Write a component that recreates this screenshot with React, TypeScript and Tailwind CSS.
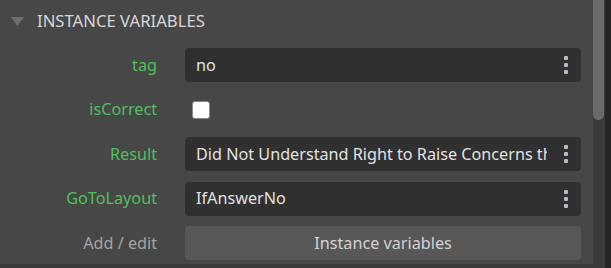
import React from "react";

const font = { fontFamily: '"Noto Sans", "Open Sans", sans-serif' };

function Dots() {
  return (
    <div className="flex flex-col items-center gap-[3px] w-[8px] shrink-0">
      <span className="block w-[4px] h-[4px] rounded-[1px] bg-[#b4bccb]" />
      <span className="block w-[4px] h-[4px] rounded-[1px] bg-[#b4bccb]" />
      <span className="block w-[4px] h-[4px] rounded-[1px] bg-[#b4bccb]" />
    </div>
  );
}

function Row({ label, labelClass, children }: { label: string; labelClass?: string; children: React.ReactNode }) {
  return (
    <div className="flex items-center h-[34px]">
      <div className={`w-[157px] shrink-0 text-right text-[16.2px] whitespace-nowrap ${labelClass ?? "text-[#4ec05c]"}`}>{label}</div>
      <div className="w-[28px] shrink-0" />
      <div className="flex-1 min-w-0 h-full flex items-center">{children}</div>
    </div>
  );
}

function Field({ value }: { value: string }) {
  return (
    <div className="flex-1 h-full rounded-[4px] bg-[#303030] flex items-center pl-[11px] pr-[11px] min-w-0">
      <div className="flex-1 min-w-0 overflow-hidden whitespace-nowrap text-[16.2px] text-[#e2e2e2] mr-[15px]">{value}</div>
      <Dots />
    </div>
  );
}

export default function App() {
  return (
    <div className="w-[611px] h-[268px] bg-[#262626] flex overflow-hidden" style={font}>
      <div className="flex-1 min-w-0 flex flex-col">
        <div className="flex-1 bg-[#474747] flex flex-col pr-[12px]">
          <div className="h-[42px] flex items-center">
            <svg width="13" height="9" viewBox="0 0 13 9" className="ml-[11px] mr-[13px] shrink-0">
              <polygon points="0,0 13,0 6.5,9" fill="#6e6e6e" />
            </svg>
            <span className="text-[16.7px] text-[#d6d6d6] whitespace-nowrap">INSTANCE VARIABLES</span>
          </div>
          <div className="flex flex-col gap-[10.5px] mt-[6px]">
            <Row label="tag">
              <Field value="no" />
            </Row>
            <Row label="isCorrect">
              <div className="ml-[7px] w-[18px] h-[18px] rounded-[3px] bg-white border border-[#8a8a8a]" />
            </Row>
            <Row label="Result">
              <Field value="Did Not Understand Right to Raise Concerns that were raised" />
            </Row>
            <Row label="GoToLayout">
              <Field value="IfAnswerNo" />
            </Row>
            <Row label="Add / edit" labelClass="text-[#a4a4a4]">
              <div className="flex-1 h-full rounded-[4px] bg-[#575757] flex items-center justify-center text-[16.2px] text-[#d2d2d2]">
                Instance variables
              </div>
            </Row>
          </div>
        </div>
        <div className="h-[4px] bg-[#393939]" />
      </div>
      <div className="w-[11px] shrink-0 bg-[#3b3b3b] flex flex-col">
        <div className="h-[120px] bg-[#6a6a6a] rounded-b-[6px]" />
      </div>
      <div className="w-[1px] shrink-0 bg-[#3a3a3a]" />
      <div className="w-[6px] shrink-0 bg-[#252525]" />
    </div>
  );
}
